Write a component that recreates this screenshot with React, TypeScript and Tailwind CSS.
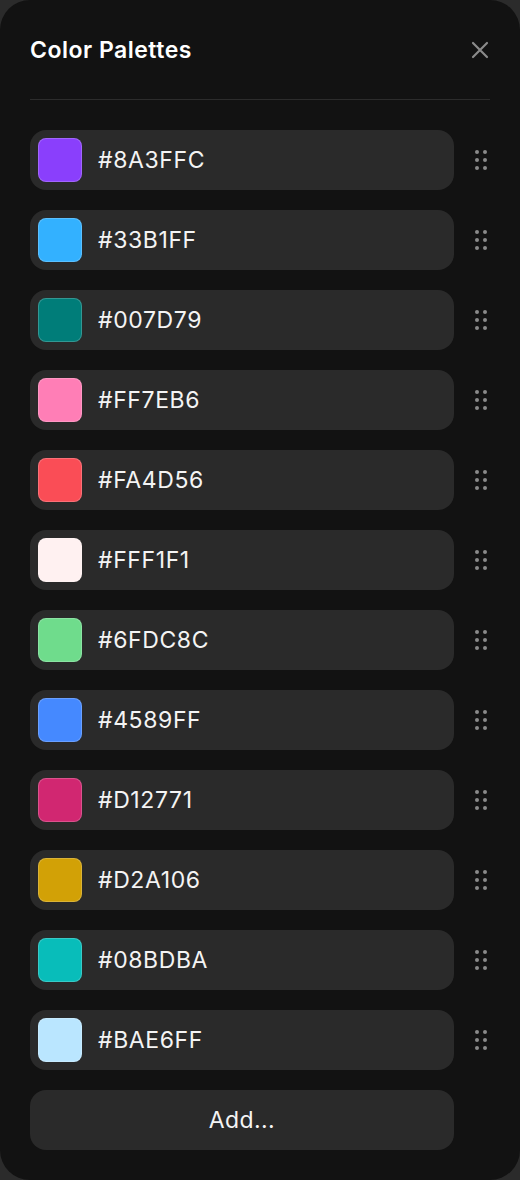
import React from "react";

const colors = [
  "#8A3FFC",
  "#33B1FF",
  "#007D79",
  "#FF7EB6",
  "#FA4D56",
  "#FFF1F1",
  "#6FDC8C",
  "#4589FF",
  "#D12771",
  "#D2A106",
  "#08BDBA",
  "#BAE6FF",
];

function DragHandle() {
  return (
    <svg width="12" height="22" viewBox="0 0 12 22" className="text-[#8a8a8a]">
      {[3, 11, 19].map((y) =>
        [2, 10].map((x) => <circle key={`${x}-${y}`} cx={x} cy={y} r="2" fill="currentColor" />)
      )}
    </svg>
  );
}

export default function App() {
  return (
    <div className="w-[520px] h-[1180px] bg-[#2b2b2b]" style={{ fontFamily: "Inter, 'Noto Sans', sans-serif" }}>
      <div className="w-full h-full bg-[#121212] rounded-[30px] px-[30px] pt-[36px]">
        <div className="flex items-center justify-between h-[28px]">
          <h1 className="text-[23px] font-semibold text-white tracking-[0.5px] leading-[28px]">Color Palettes</h1>
          <svg width="28" height="28" viewBox="0 0 28 28" className="mr-[-4px]">
            <path d="M7 7 L21 21 M21 7 L7 21" stroke="#8a8a8a" strokeWidth="2.2" strokeLinecap="round" />
          </svg>
        </div>
        <div className="mt-[35px] h-px bg-[#2c2c2c]" />
        <div className="mt-[30px] flex flex-col gap-[20px]">
          {colors.map((c) => (
            <div key={c} className="flex items-center">
              <div className="w-[424px] h-[60px] rounded-[16px] bg-[#2a2a2a] flex items-center pl-[8px]">
                <div
                  className="w-[44px] h-[44px] rounded-[8px] border border-white/20"
                  style={{ backgroundColor: c }}
                />
                <span className="ml-[16px] text-[23px] text-[#f4f4f4] tracking-[0.6px]">{c}</span>
              </div>
              <div className="ml-[21px]">
                <DragHandle />
              </div>
            </div>
          ))}
          <button className="w-[424px] h-[60px] rounded-[16px] bg-[#2a2a2a] text-[23px] text-[#f4f4f4] tracking-[0.4px]">
            Add...
          </button>
        </div>
      </div>
    </div>
  );
}
